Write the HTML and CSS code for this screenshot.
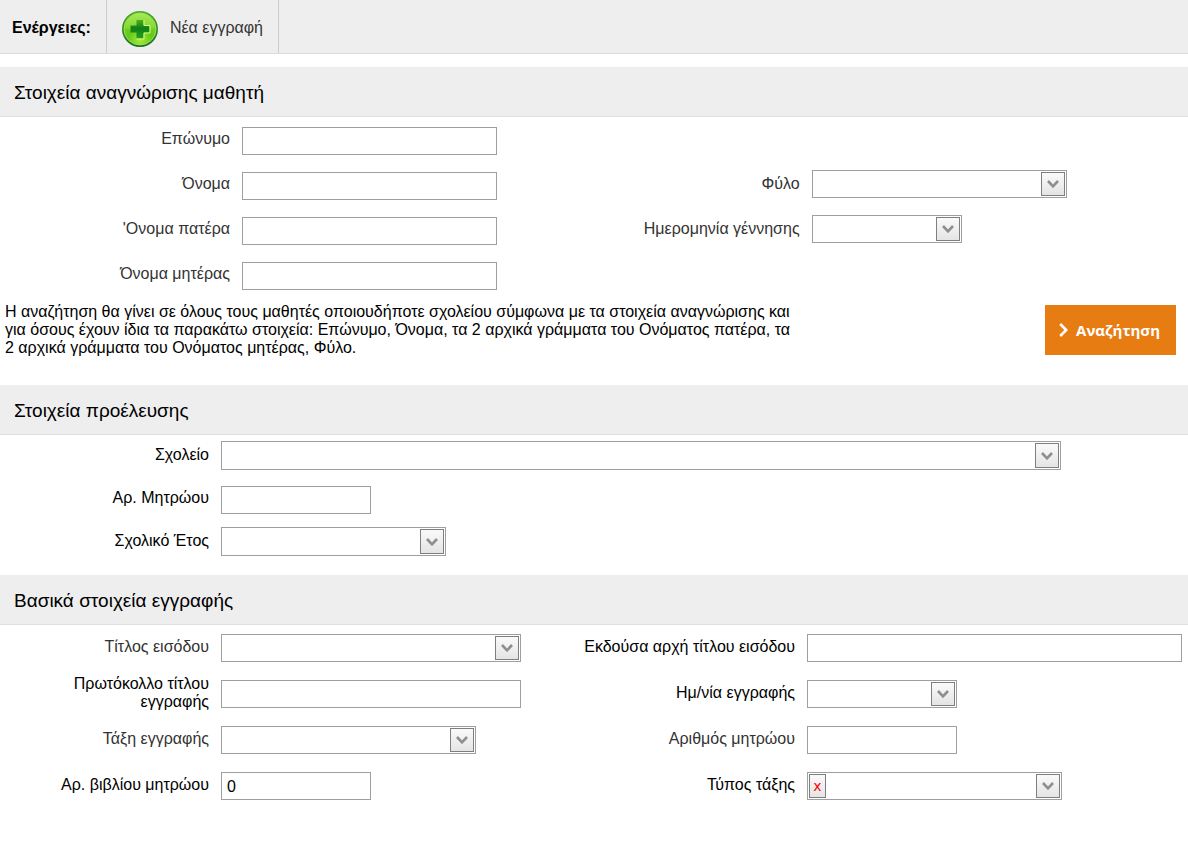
FILE: index.html
```html
<!DOCTYPE html>
<html lang="el">
<head>
<meta charset="utf-8">
<title>Νέα εγγραφή</title>
<link rel="stylesheet" href="styles.css">
</head>
<body>
<svg class="defs" aria-hidden="true">
  <symbol id="chevron" viewBox="0 0 12 8"><path d="M1 1L6 6.300L11 1" fill="none" stroke="#8e8e8e" stroke-width="2.600"/></symbol>
</svg>

<nav class="toolbar">
  <strong class="toolbar-title">Ενέργειες:</strong>
  <button class="toolbar-action" type="button">
    <svg class="plus-icon" viewBox="0 0 38 38" aria-hidden="true">
      <defs>
        <linearGradient id="rim" x1="0" y1="0" x2="0" y2="1"><stop offset="0" stop-color="#4fae28"/><stop offset="1" stop-color="#146b22"/></linearGradient>
        <radialGradient id="ball" cx=".5" cy=".85" r=".85"><stop offset="0" stop-color="#a6ea3a"/><stop offset=".45" stop-color="#62c818"/><stop offset="1" stop-color="#86da34"/></radialGradient>
        <linearGradient id="gloss" x1="0" y1="0" x2="0" y2="1"><stop offset="0" stop-color="#b4ee6a"/><stop offset="1" stop-color="#84d82e"/></linearGradient>
        <linearGradient id="cross" x1="0" y1="0" x2="0" y2="1"><stop offset="0" stop-color="#4caf1c"/><stop offset=".45" stop-color="#0f7f18"/><stop offset="1" stop-color="#26a01c"/></linearGradient>
      </defs>
      <circle cx="19" cy="19" r="18" fill="url(#rim)"/>
      <circle cx="19" cy="19" r="16" fill="url(#ball)" stroke="#a2e350" stroke-width="1"/>
      <path d="M4 18a15 14.500 0 0 1 30 0q-15 6-30 0z" fill="url(#gloss)" opacity=".7"/>
      <path d="M15.500 10h7v5.500h6v7h-6v6h-7v-6h-6v-7h6z" fill="url(#cross)"/>
      <path d="M23 10v5.500h6v7.500h-6v6h-7.500" fill="none" stroke="#d5fa80" stroke-width="1"/>
    </svg>
    <span>Νέα εγγραφή</span>
  </button>
</nav>

<form>
  <section>
    <h2 class="section-title">Στοιχεία αναγνώρισης μαθητή</h2>
    <div class="fields student">
      <label class="muted" for="surname">Επώνυμο</label>
      <input class="box w255" id="surname" type="text">

      <label class="muted start" for="name">Όνομα</label>
      <input class="box w255" id="name" type="text">
      <label class="muted" for="gender">Φύλο</label>
      <span class="box combo w255"><select id="gender"><option></option></select><span class="arrow"><svg><use href="#chevron"/></svg></span></span>

      <label class="muted start" for="father">'Ονομα πατέρα</label>
      <input class="box w255" id="father" type="text">
      <label class="muted" for="birth">Ημερομηνία γέννησης</label>
      <span class="box combo w150"><input id="birth" type="text"><button class="arrow" type="button" aria-label="Ημερολόγιο"><svg><use href="#chevron"/></svg></button></span>

      <label class="muted start" for="mother">Όνομα μητέρας</label>
      <input class="box w255" id="mother" type="text">
    </div>
    <div class="search">
      <p class="note">Η αναζήτηση θα γίνει σε όλους τους μαθητές οποιουδήποτε σχολείου σύμφωνα με τα στοιχεία αναγνώρισης και για όσους έχουν ίδια τα παρακάτω στοιχεία: Επώνυμο, Όνομα, τα 2 αρχικά γράμματα του Ονόματος πατέρα, τα 2 αρχικά γράμματα του Ονόματος μητέρας, Φύλο.</p>
      <button class="search-button" type="button">
        <svg class="search-icon" viewBox="0 0 9 14" aria-hidden="true"><path d="M1.200 1L7.200 7L1.200 13" fill="none" stroke="#fff" stroke-width="2.600"/></svg>
        <span>Αναζήτηση</span>
      </button>
    </div>
  </section>

  <section>
    <h2 class="section-title">Στοιχεία προέλευσης</h2>
    <div class="fields origin">
      <label for="school">Σχολείο</label>
      <span class="box combo w840"><select id="school"><option></option></select><span class="arrow"><svg><use href="#chevron"/></svg></span></span>
      <label for="regno">Αρ. Μητρώου</label>
      <input class="box w150" id="regno" type="text">
      <label for="year">Σχολικό Έτος</label>
      <span class="box combo w225"><select id="year"><option></option></select><span class="arrow"><svg><use href="#chevron"/></svg></span></span>
    </div>
  </section>

  <section>
    <h2 class="section-title">Βασικά στοιχεία εγγραφής</h2>
    <div class="fields enrolment">
      <label class="muted" for="title">Τίτλος εισόδου</label>
      <span class="box combo w300"><select id="title"><option></option></select><span class="arrow"><svg><use href="#chevron"/></svg></span></span>
      <label for="issuer">Εκδούσα αρχή τίτλου εισόδου</label>
      <input class="box w375" id="issuer" type="text">

      <label for="protocol">Πρωτόκολλο τίτλου εγγραφής</label>
      <input class="box w300" id="protocol" type="text">
      <label for="date">Ημ/νία εγγραφής</label>
      <span class="box combo w150"><input id="date" type="text"><button class="arrow" type="button" aria-label="Ημερολόγιο"><svg><use href="#chevron"/></svg></button></span>

      <label class="muted" for="class">Τάξη εγγραφής</label>
      <span class="box combo w255"><select id="class"><option></option></select><span class="arrow"><svg><use href="#chevron"/></svg></span></span>
      <label class="muted" for="number">Αριθμός μητρώου</label>
      <input class="box w150" id="number" type="text">

      <label for="book">Αρ. βιβλίου μητρώου</label>
      <input class="box w150" id="book" type="text" value="0">
      <label for="type">Τύπος τάξης</label>
      <span class="box combo w255"><select id="type"><option></option></select><button class="clear" type="button">x</button><span class="arrow"><svg><use href="#chevron"/></svg></span></span>
    </div>
  </section>
</form>
</body>
</html>
```
FILE: styles.css
```css
* { box-sizing: border-box; }

body {
  margin: 0;
  background: #fff;
  color: #000;
  font: 16px/18px "Liberation Sans", Arial, sans-serif;
}

button, input, select { font: inherit; color: inherit; }

.defs { display: none; }

/* Toolbar */
.toolbar {
  display: flex;
  height: 54px;
  margin-bottom: 13px;
  background: #eee;
  border-bottom: 1px solid #dcdcdc;
}

.toolbar-title {
  display: flex;
  align-items: center;
  padding: 2px 15px 0 12px;
}

.toolbar-action {
  display: flex;
  align-items: center;
  gap: 11px;
  padding: 2px 15px 0 14px;
  border: solid #ccc;
  border-width: 0 1px;
  background: none;
  color: #333;
}

.plus-icon { width: 38px; height: 38px; margin-top: 2px; }

/* Sections */
.section-title {
  margin: 0;
  padding: 2px 14px 0;
  background: #eee;
  border-bottom: 1px solid #e0e0e2;
  font-size: 19px;
  font-weight: 400;
  line-height: 47px;
}

.fields {
  display: grid;
  align-items: center;
  column-gap: 12px;
}

.fields label {
  padding-bottom: 4px;
  text-align: right;
}

.muted { color: #333; }
.start { grid-column: 1; }

.student {
  grid-template-columns: 230px minmax(255px, 49fr) 184px minmax(255px, 51fr);
  grid-auto-rows: 45px;
  padding-top: 1px;
}

.student .combo { margin-bottom: 4px; }

.origin {
  grid-template-columns: 209px 1fr;
  grid-auto-rows: 43px;
  padding-bottom: 11px;
}

.origin .combo { height: 29px; margin-bottom: 2px; }

.enrolment {
  grid-template-columns: 209px minmax(300px, 1fr) 220px 375px;
  grid-auto-rows: 46px;
  padding-right: 6px;
}

.enrolment label { padding: 0 0 2px 50px; }
.enrolment label:nth-of-type(even) { padding-left: 0; }

/* Controls */
.box {
  height: 28px;
  padding: 2px 5px 0;
  border: 1px solid #9f9f9f;
  background: #fff;
}

.w150 { width: 150px; }
.w225 { width: 225px; }
.w255 { width: 255px; }
.w300 { width: 300px; }
.w375 { width: 375px; }
.w840 { width: 840px; }

.combo {
  display: grid;
  grid-template-columns: auto 1fr 24px;
  padding: 1px;
}

.combo select,
.combo > input {
  grid-area: 1 / 1 / 2 / 4;
  min-width: 0;
  width: 100%;
  padding: 0 28px 0 4px;
  border: 0;
  background: none;
  appearance: none;
}

.arrow, .clear {
  display: flex;
  align-items: center;
  justify-content: center;
  grid-row: 1;
  padding: 0;
  border: 1px solid #7f7f7f;
  background: linear-gradient(#fafafa, #e4e4e4);
}

.arrow { grid-column: 3; }
span.arrow { pointer-events: none; }
.arrow svg { width: 12px; height: 8px; }

.clear {
  grid-column: 1;
  width: 17px;
  color: #f00;
  font: 14px/14px "DejaVu Sans", Verdana, sans-serif;
}

/* Search strip */
.search {
  display: flex;
  align-items: center;
  justify-content: space-between;
  gap: 24px;
  padding: 5px 12px 28px 5px;
}

.note { max-width: 795px; margin: 0; }

.search-button {
  display: flex;
  flex: none;
  align-items: center;
  gap: 8px;
  height: 50px;
  padding: 0 16px 0 14px;
  border: 0;
  background: #e77c12;
  color: #fff;
  font-family: "Open Sans", sans-serif;
  font-size: 15px;
  font-weight: 700;
}

.search-icon { width: 9px; height: 14px; }
```
